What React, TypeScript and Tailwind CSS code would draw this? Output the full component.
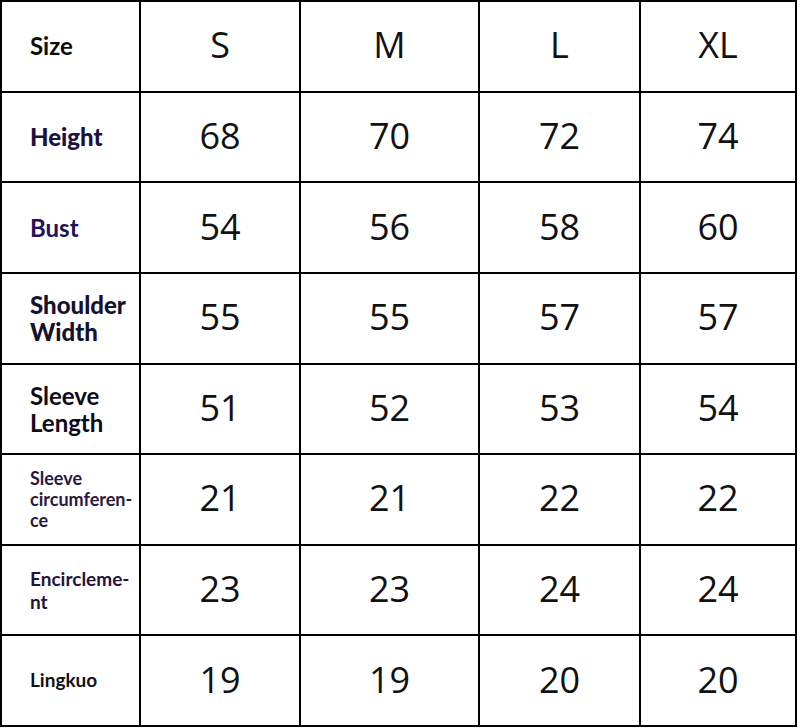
import React from "react";

type Row = {
  label: React.ReactNode;
  labelClass: string;
  values: string[];
};

const rows: Row[] = [
  {
    label: "Size",
    labelClass: "text-[24px] font-bold text-[#0a0a0a]",
    values: ["S", "M", "L", "XL"],
  },
  {
    label: "Height",
    labelClass: "text-[24px] font-black text-[#1b1240]",
    values: ["68", "70", "72", "74"],
  },
  {
    label: "Bust",
    labelClass: "text-[24px] font-bold text-[#21125a]",
    values: ["54", "56", "58", "60"],
  },
  {
    label: (
      <>
        Shoulder
        <br />
        Width
      </>
    ),
    labelClass: "text-[24px] font-black leading-[27px] text-[#15122e]",
    values: ["55", "55", "57", "57"],
  },
  {
    label: (
      <>
        Sleeve
        <br />
        Length
      </>
    ),
    labelClass: "text-[24px] font-bold leading-[27px] text-[#0d0a1a]",
    values: ["51", "52", "53", "54"],
  },
  {
    label: (
      <>
        Sleeve
        <br />
        circumferen-
        <br />
        ce
      </>
    ),
    labelClass: "text-[18px] font-bold leading-[21px] text-[#2a1840]",
    values: ["21", "21", "22", "22"],
  },
  {
    label: (
      <>
        Encircleme-
        <br />
        nt
      </>
    ),
    labelClass: "text-[19px] font-bold leading-[23px] text-[#22143a]",
    values: ["23", "23", "24", "24"],
  },
  {
    label: "Lingkuo",
    labelClass: "text-[19px] font-bold text-[#111018]",
    values: ["19", "19", "20", "20"],
  },
];

export default function App() {
  return (
    <div className="w-[800px] h-[728px] bg-white">
      <div className="grid w-[797px] h-[727px] grid-cols-[137px_158px_177px_159px_154px] grid-rows-[repeat(8,1fr)] gap-[2px] bg-black p-[2px]">
        {rows.map((row, i) => (
          <React.Fragment key={i}>
            <div
              className={`flex items-center bg-white pl-[28px] font-['Lato',sans-serif] ${row.labelClass}`}
            >
              <div>{row.label}</div>
            </div>
            {row.values.map((v, j) => (
              <div
                key={j}
                className="flex items-center justify-center bg-white pb-[2px] font-['Open_Sans',sans-serif] text-[36px] text-[#111]"
              >
                {v}
              </div>
            ))}
          </React.Fragment>
        ))}
      </div>
    </div>
  );
}
